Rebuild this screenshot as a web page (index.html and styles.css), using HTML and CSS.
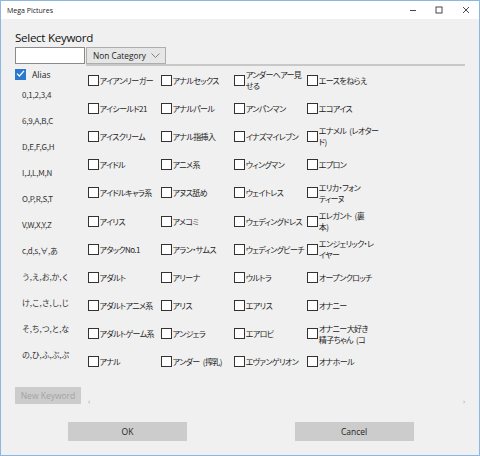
FILE: index.html
```html
<!DOCTYPE html>
<html lang="ja">
<head>
    <meta charset="UTF-8">
    <title>Mega Pictures</title>
    <link rel="stylesheet" href="styles.css">
</head>
<body>
    <div class="window">
        <div class="titlebar">
            <span class="title">Mega Pictures</span>
            <div class="caption-buttons">
                <span class="caption-btn">
                    <svg width="8" height="8" viewBox="0 0 8 8"><line x1="1" y1="4.5" x2="7" y2="4.5" stroke="#333" stroke-width="0.9"/></svg>
                </span>
                <span class="caption-btn">
                    <svg width="8" height="8" viewBox="0 0 8 8"><rect x="1" y="1" width="6" height="6" fill="none" stroke="#333" stroke-width="0.9"/></svg>
                </span>
                <span class="caption-btn">
                    <svg width="8" height="8" viewBox="0 0 8 8"><path d="M1 1 L7 7 M7 1 L1 7" stroke="#333" stroke-width="0.9"/></svg>
                </span>
            </div>
        </div>

        <div class="content">
            <h1>Select Keyword</h1>
            <div class="search-row">
                <input type="text" class="keyword-input">
                <div class="combo">
                    <span>Non Category</span>
                    <svg width="9" height="5" viewBox="0 0 9 5"><path d="M0.5 0.5 L4.5 4.5 L8.5 0.5" fill="none" stroke="#777" stroke-width="0.9"/></svg>
                </div>
            </div>
            <div class="rule"></div>

            <div class="body">
                <div class="side">
                    <label class="alias">
                        <span class="check checked">
                            <svg width="11" height="11" viewBox="0 0 11 11"><path d="M2 5.6 L4.4 8 L9 2.8" fill="none" stroke="#fff" stroke-width="1.2"/></svg>
                        </span>
                        Alias
                    </label>
                    <ul class="letters">
                        <li>0,1,2,3,4</li>
                        <li>6,9,A,B,C</li>
                        <li>D,E,F,G,H</li>
                        <li>I,J,L,M,N</li>
                        <li>O,P,R,S,T</li>
                        <li>V,W,X,Y,Z</li>
                        <li>c,d,s,∀,あ</li>
                        <li>う,え,お,か,く</li>
                        <li>け,こ,さ,し,じ</li>
                        <li>そ,ち,つ,と,な</li>
                        <li>の,ひ,ふ,ぶ,ぷ</li>
                    </ul>
                </div>

                <div class="keywords">
                    <div class="kw"><span class="check"></span><span class="kw-text">アイアンリーガー</span></div>
                    <div class="kw"><span class="check"></span><span class="kw-text">アナルセックス</span></div>
                    <div class="kw"><span class="check"></span><span class="kw-text">アンダーヘアー見<br>せる</span></div>
                    <div class="kw"><span class="check"></span><span class="kw-text">エースをねらえ</span></div>

                    <div class="kw"><span class="check"></span><span class="kw-text">アイシールド21</span></div>
                    <div class="kw"><span class="check"></span><span class="kw-text">アナルパール</span></div>
                    <div class="kw"><span class="check"></span><span class="kw-text">アンパンマン</span></div>
                    <div class="kw"><span class="check"></span><span class="kw-text">エコアイス</span></div>

                    <div class="kw"><span class="check"></span><span class="kw-text">アイスクリーム</span></div>
                    <div class="kw"><span class="check"></span><span class="kw-text">アナル指挿入</span></div>
                    <div class="kw"><span class="check"></span><span class="kw-text">イナズマイレブン</span></div>
                    <div class="kw"><span class="check"></span><span class="kw-text">エナメル (レオター<br>ド)</span></div>

                    <div class="kw"><span class="check"></span><span class="kw-text">アイドル</span></div>
                    <div class="kw"><span class="check"></span><span class="kw-text">アニメ系</span></div>
                    <div class="kw"><span class="check"></span><span class="kw-text">ウィングマン</span></div>
                    <div class="kw"><span class="check"></span><span class="kw-text">エプロン</span></div>

                    <div class="kw"><span class="check"></span><span class="kw-text">アイドルキャラ系</span></div>
                    <div class="kw"><span class="check"></span><span class="kw-text">アヌス舐め</span></div>
                    <div class="kw"><span class="check"></span><span class="kw-text">ウェイトレス</span></div>
                    <div class="kw"><span class="check"></span><span class="kw-text">エリカ・フォン<br>ティーヌ</span></div>

                    <div class="kw"><span class="check"></span><span class="kw-text">アイリス</span></div>
                    <div class="kw"><span class="check"></span><span class="kw-text">アメコミ</span></div>
                    <div class="kw"><span class="check"></span><span class="kw-text">ウェディングドレス</span></div>
                    <div class="kw"><span class="check"></span><span class="kw-text">エレガント (裏<br>本)</span></div>

                    <div class="kw"><span class="check"></span><span class="kw-text">アタックNo.1</span></div>
                    <div class="kw"><span class="check"></span><span class="kw-text">アラン・サムス</span></div>
                    <div class="kw"><span class="check"></span><span class="kw-text">ウェディングビーチ</span></div>
                    <div class="kw"><span class="check"></span><span class="kw-text">エンジェリック・レ<br>イヤー</span></div>

                    <div class="kw"><span class="check"></span><span class="kw-text">アダルト</span></div>
                    <div class="kw"><span class="check"></span><span class="kw-text">アリーナ</span></div>
                    <div class="kw"><span class="check"></span><span class="kw-text">ウルトラ</span></div>
                    <div class="kw"><span class="check"></span><span class="kw-text">オープンクロッチ</span></div>

                    <div class="kw"><span class="check"></span><span class="kw-text">アダルトアニメ系</span></div>
                    <div class="kw"><span class="check"></span><span class="kw-text">アリス</span></div>
                    <div class="kw"><span class="check"></span><span class="kw-text">エアリス</span></div>
                    <div class="kw"><span class="check"></span><span class="kw-text">オナニー</span></div>

                    <div class="kw"><span class="check"></span><span class="kw-text">アダルトゲーム系</span></div>
                    <div class="kw"><span class="check"></span><span class="kw-text">アンジェラ</span></div>
                    <div class="kw"><span class="check"></span><span class="kw-text">エアロビ</span></div>
                    <div class="kw"><span class="check"></span><span class="kw-text">オナニー大好き<br>精子ちゃん (コ</span></div>

                    <div class="kw"><span class="check"></span><span class="kw-text">アナル</span></div>
                    <div class="kw"><span class="check"></span><span class="kw-text">アンダー (搾乳)</span></div>
                    <div class="kw"><span class="check"></span><span class="kw-text">エヴァンゲリオン</span></div>
                    <div class="kw"><span class="check"></span><span class="kw-text">オナホール</span></div>
                </div>
            </div>

            <div class="footer-row">
                <button class="btn new-keyword" disabled>New Keyword</button>
                <div class="hscroll">
                    <span>‹</span>
                    <span>›</span>
                </div>
            </div>

            <div class="actions">
                <button class="btn">OK</button>
                <button class="btn">Cancel</button>
            </div>
        </div>
    </div>
</body>
</html>
```

FILE: styles.css
```css
* {
    box-sizing: border-box;
}
body {
    margin: 0;
    font-family: 'Open Sans', 'Noto Sans', sans-serif;
    color: #1e1e1e;
}
.window {
    width: 480px;
    height: 456px;
    border: 1px solid #8db6e2;
    background-color: #f0f0f0;
    display: flex;
    flex-direction: column;
    overflow: hidden;
}
.titlebar {
    height: 18px;
    background-color: #ffffff;
    display: flex;
    align-items: center;
    padding-left: 6px;
    flex-shrink: 0;
}
.title {
    font-size: 7px;
    color: #222;
}
.caption-buttons {
    margin-left: auto;
    display: flex;
    height: 100%;
}
.caption-btn {
    width: 26.5px;
    display: flex;
    align-items: center;
    justify-content: center;
}
.content {
    padding: 0 14px;
}
h1 {
    margin: 11px 0 0;
    height: 16px;
    line-height: 16px;
    font-size: 11.6px;
    font-weight: normal;
    letter-spacing: -0.3px;
    color: #111;
}
.search-row {
    display: flex;
    gap: 1px;
    height: 17px;
    margin-top: 1px;
}
.keyword-input {
    width: 70px;
    height: 17px;
    border: 1px solid #8a8a8a;
    background-color: #ffffff;
    margin: 0;
    padding: 0;
}
.combo {
    width: 80px;
    height: 17px;
    border: 1px solid #adadad;
    background-color: #e6e6e6;
    display: flex;
    align-items: center;
    padding-left: 6px;
    font-size: 8.3px;
    color: #222;
}
.combo svg {
    margin-left: 5px;
}
.rule {
    margin-left: 71px;
    height: 2px;
    background-color: #c8c8c8;
}
.body {
    display: flex;
}
.side {
    width: 73px;
    flex-shrink: 0;
    padding-top: 2px;
}
.alias {
    display: flex;
    align-items: center;
    height: 12px;
    font-size: 8.5px;
    gap: 6px;
    color: #222;
}
.check {
    width: 11px;
    height: 11px;
    border: 1.4px solid #333;
    background-color: #ffffff;
    flex-shrink: 0;
    display: block;
}
.check.checked {
    background-color: #2b78cf;
    border-color: #2b78cf;
    position: relative;
}
.check.checked svg {
    position: absolute;
    top: -1.4px;
    left: -1.4px;
}
.letters {
    list-style: none;
    margin: 2px 0 0;
    padding: 0 0 0 7px;
    font-family: 'Noto Sans CJK JP', sans-serif;
    font-size: 8px;
    letter-spacing: -0.2px;
    color: #333;
}
.letters li {
    height: 26px;
    line-height: 26px;
    white-space: nowrap;
}
.keywords {
    display: grid;
    grid-template-columns: repeat(4, 73.1px);
    grid-auto-rows: 28.2px;
}
.kw {
    display: flex;
    align-items: center;
    font-family: 'Noto Sans CJK JP', sans-serif;
    font-feature-settings: "palt";
    font-size: 8px;
    letter-spacing: -0.6px;
    word-spacing: 2px;
    line-height: 11px;
    color: #1e1e1e;
    white-space: nowrap;
}
.kw-text {
    padding-left: 0.5px;
}
.footer-row {
    display: flex;
    align-items: flex-start;
    margin-top: 10.5px;
}
.btn {
    background-color: #cccccc;
    border: none;
    margin: 0;
    padding: 0;
    font-family: 'Open Sans', sans-serif;
    font-size: 8.5px;
    color: #1e1e1e;
}
.new-keyword {
    width: 66px;
    height: 17.6px;
    color: #a3a3a3;
}
.hscroll {
    flex: 1;
    margin: 10px 0 0 7px;
    height: 10px;
    display: flex;
    justify-content: space-between;
    font-size: 7px;
    line-height: 10px;
    color: #9a9a9a;
}
.actions {
    display: flex;
    gap: 107.6px;
    margin: 15.6px 0 0 53px;
}
.actions .btn {
    width: 119px;
    height: 18.7px;
}
```
